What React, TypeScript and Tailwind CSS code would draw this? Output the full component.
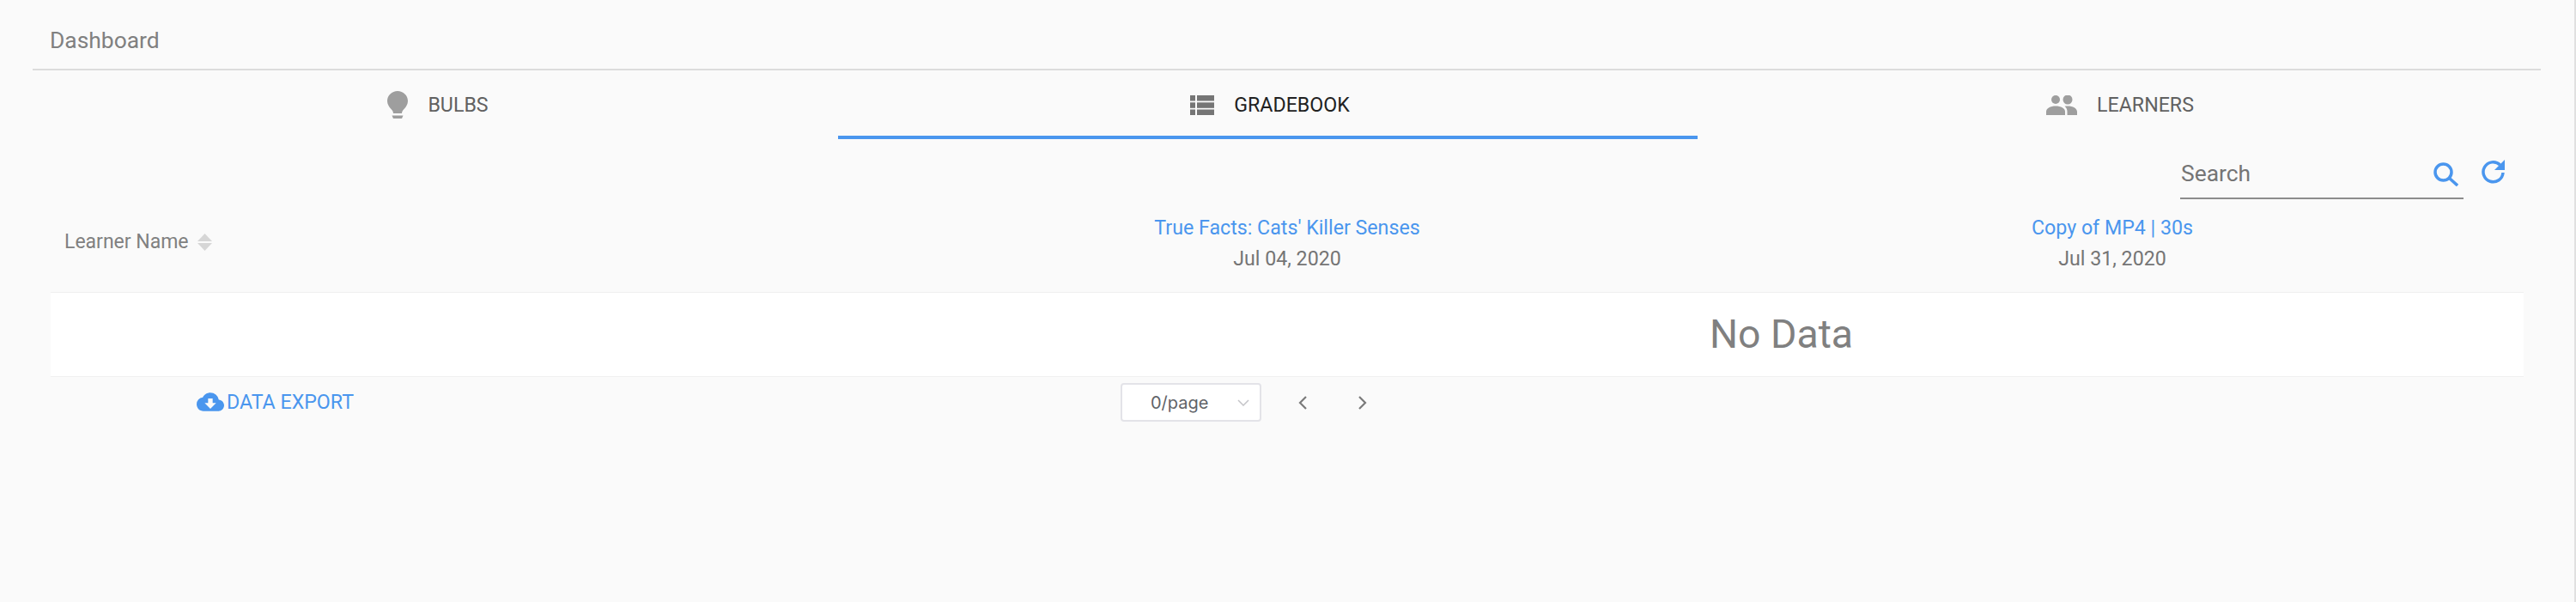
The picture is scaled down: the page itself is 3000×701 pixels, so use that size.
import React from "react";
import { MdCloudDownload } from "react-icons/md";

const Bulb = () => (
  <svg width="24" height="32" viewBox="0 0 24 32" className="block">
    <path d="M12 0C5.400 0 0 5.200 0 11.500c0 4 2 6.600 4 9 1.600 1.900 3 3.200 3 5.500h10c0-2.300 1.400-3.600 3-5.500 2-2.400 4-5 4-9C24 5.200 18.600 0 12 0z" fill="#9e9e9e" />
    <path d="M5.500 28.500h13L17 32H7z" fill="#9e9e9e" />
  </svg>
);

const ListIcon = () => (
  <svg width="28" height="23" viewBox="0 0 28 23" className="block" fill="#757575">
    <rect x="0" y="0" width="6" height="6.500" />
    <rect x="8" y="0" width="20" height="6.500" />
    <rect x="0" y="8.300" width="6" height="6.500" />
    <rect x="8" y="8.300" width="20" height="6.500" />
    <rect x="0" y="16.500" width="6" height="6.500" />
    <rect x="8" y="16.500" width="20" height="6.500" />
  </svg>
);

const People = () => (
  <svg width="36" height="23" viewBox="0 0 36 23" className="block" fill="#9e9e9e">
    <circle cx="11" cy="5" r="5" />
    <circle cx="25" cy="5" r="5.500" />
    <path d="M0 23v-4c0-4 5-6.500 11-6.500S22 15 22 19v4z" />
    <path d="M24.500 23v-4c0-2.600-1-4.800-3-6.300 1-.2 2.300-.3 3.500-.3 6 0 11 2.600 11 6.600v4z" />
  </svg>
);

const SearchIcon = () => (
  <svg width="29" height="28" viewBox="0 0 29 28" className="block" fill="none" stroke="#4a96ee">
    <circle cx="11.500" cy="11.500" r="9.500" strokeWidth="3.500" />
    <path d="M18 18l10 9" strokeWidth="3.500" />
  </svg>
);

const RefreshIcon = () => (
  <svg width="28" height="28" viewBox="0 0 28 28" className="block" fill="none">
    <path d="M25 15a11.500 11.500 0 1 1-3.500-9" stroke="#4a96ee" strokeWidth="3.500" />
    <path d="M27 0v12H15z" fill="#4a96ee" />
  </svg>
);

const Tab = ({ icon, label, active, className }: { icon: React.ReactNode; label: string; active?: boolean; className: string }) => (
  <div className={`flex h-[80px] items-center justify-center gap-[23px] border-y-4 border-t-transparent text-[23.2px] ${className} ${active ? "border-b-[#4a96ee] text-[#212121]" : "border-b-transparent text-[#616161]"}`}>
    {icon}
    <span>{label}</span>
  </div>
);

const ColHead = ({ title, date }: { title: string; date: string }) => (
  <div className="flex flex-col items-center gap-[13px] text-[23.2px] leading-[23px]">
    <span className="text-[#4a96ee]">{title}</span>
    <span className="text-[#757575]">{date}</span>
  </div>
);

export default function App() {
  return (
    <div className="box-border min-h-screen border-r-2 border-[#e0e0e0] bg-[#fafafa] font-['Roboto',sans-serif]">
      <div className="pl-[38px] pr-[39px]">
        <div className="flex h-[82px] items-center border-b-2 border-[#dcdcdc] pl-[20px] pt-[18px] text-[26.4px] text-[#808080]">
          <span className="-mt-[2px]">Dashboard</span>
        </div>
        <div className="grid grid-cols-[938px_1001px_982px]">
          <Tab icon={<Bulb />} label="BULBS" className="pl-[6px]" />
          <Tab icon={<ListIcon />} label="GRADEBOOK" active className="pl-[5px]" />
          <Tab icon={<People />} label="LEARNERS" className="pl-[2px]" />
        </div>
      </div>

      <div className="flex h-[64px] items-start justify-end pr-[80px] pt-[24px]">
        <div className="flex h-[46px] w-[330px] items-center justify-between border-b-2 border-[#8c8c8c] pb-[10px] pl-[1px] text-[26.4px] text-[#757575]">
          <span>Search</span>
          <span className="mr-[6px]"><SearchIcon /></span>
        </div>
        <span className="ml-[21px]"><RefreshIcon /></span>
      </div>

      <div className="px-[59px]">
        <div className="grid h-[114px] grid-cols-[960px_960px_962px] items-center">
          <div className="flex items-center gap-[10px] pb-[2px] pl-[16px] text-[23px] text-[#808080]">
            <span>Learner Name</span>
            <svg width="17" height="20" viewBox="0 0 17 20" fill="#d6d6d6" className="block">
              <path d="M8.500 0L17 9H0z" />
              <path d="M0 11h17l-8.500 9z" />
            </svg>
          </div>
          <ColHead title="True Facts: Cats' Killer Senses" date="Jul 04, 2020" />
          <ColHead title="Copy of MP4 | 30s" date="Jul 31, 2020" />
        </div>
        <div className="flex h-[99px] items-center justify-center border-y border-[#f0f0f0] bg-white pl-[1151px] text-[46.4px] text-[#808080]">
          No Data
        </div>
      </div>

      <div className="mt-[7px] flex items-center">
        <div className="ml-[229px] flex w-[1076px] items-center gap-[3px] text-[23.2px] text-[#4a96ee]">
          <MdCloudDownload size={32} />
          <span>DATA EXPORT</span>
        </div>
        <div className="flex h-[45px] w-[164px] items-center justify-between rounded-[4px] border-2 border-[#e3e3e8] bg-white pl-[33px] pr-[12px] font-['Inter',sans-serif] text-[20px] text-[#5f6368]">
          <span>0/page</span>
          <svg width="14" height="8" viewBox="0 0 14 8" fill="none" stroke="#c4c4c8" strokeWidth="1.500" className="block">
            <path d="M1 1l6 6 6-6" />
          </svg>
        </div>
        <svg width="10" height="16" viewBox="0 0 10 16" fill="none" stroke="#7a7a7a" strokeWidth="2.200" className="ml-[43px] block">
          <path d="M9 1L2 8l7 7" />
        </svg>
        <svg width="10" height="16" viewBox="0 0 10 16" fill="none" stroke="#7a7a7a" strokeWidth="2.200" className="ml-[60px] block">
          <path d="M1 1l7 7-7 7" />
        </svg>
      </div>
    </div>
  );
}
